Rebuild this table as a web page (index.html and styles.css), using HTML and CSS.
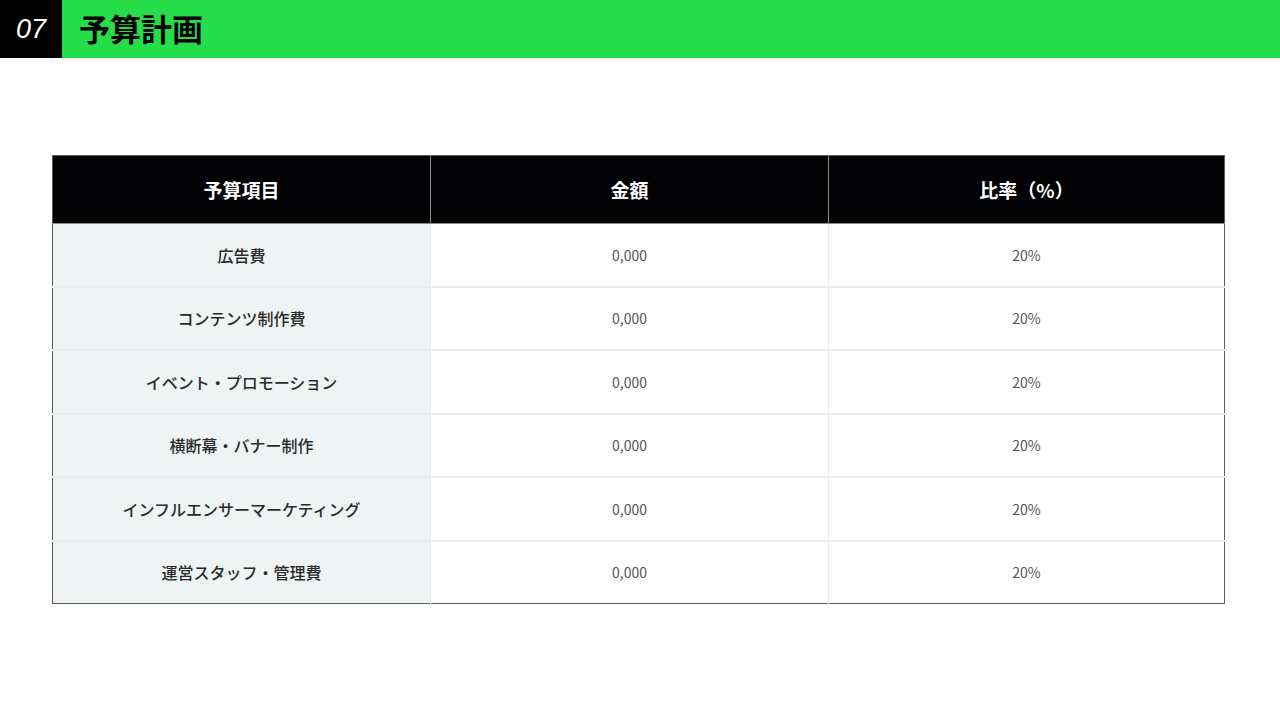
FILE: index.html
```html
<!DOCTYPE html>
<html lang="ja">
<head>
    <meta charset="UTF-8">
    <title>予算計画</title>
    <link rel="stylesheet" href="styles.css">
</head>
<body>
    <header class="slide-header">
        <div class="slide-num">07</div>
        <h1 class="slide-title">予算計画</h1>
    </header>

    <main class="content">
        <table class="budget">
            <colgroup>
                <col class="col-item">
                <col class="col-amount">
                <col class="col-rate">
            </colgroup>
            <thead>
                <tr>
                    <th>予算項目</th>
                    <th>金額</th>
                    <th>比率（%）</th>
                </tr>
            </thead>
            <tbody>
                <tr><td class="item">広告費</td><td>0,000</td><td>20%</td></tr>
                <tr><td class="item">コンテンツ制作費</td><td>0,000</td><td>20%</td></tr>
                <tr><td class="item">イベント・プロモーション</td><td>0,000</td><td>20%</td></tr>
                <tr><td class="item">横断幕・バナー制作</td><td>0,000</td><td>20%</td></tr>
                <tr><td class="item">インフルエンサーマーケティング</td><td>0,000</td><td>20%</td></tr>
                <tr><td class="item">運営スタッフ・管理費</td><td>0,000</td><td>20%</td></tr>
            </tbody>
        </table>
    </main>
</body>
</html>
```

FILE: styles.css
```css
body {
    margin: 0;
    padding: 0;
    background: #fff;
    font-family: "Noto Sans CJK JP", "Noto Sans", sans-serif;
}

.slide-header {
    display: flex;
    align-items: stretch;
    height: 58px;
    background-color: #25dd4a;
}

.slide-num {
    width: 62px;
    background-color: #000;
    color: #fff;
    font-family: "Liberation Sans", Arial, sans-serif;
    font-style: italic;
    font-size: 27px;
    display: flex;
    align-items: center;
    justify-content: center;
}

.slide-title {
    margin: 0 0 0 17px;
    font-size: 31px;
    font-weight: bold;
    color: #000;
    line-height: 56px;
}

.content {
    padding: 97px 55px 0 52px;
}

.budget {
    width: 100%;
    border-collapse: collapse;
    table-layout: fixed;
    border: 1px solid #5c5c5c;
}

.col-item { width: 378px; }
.col-amount { width: 398px; }

.budget th {
    height: 67px;
    background-color: #020103;
    color: #fff;
    font-size: 19px;
    font-weight: bold;
    border-left: 1px solid #8a8a8a;
    padding: 0;
}

.budget th:first-child {
    border-left: none;
}

.budget td {
    height: 61.5px;
    padding: 0;
    text-align: center;
    font-size: 14px;
    color: #555;
    border-top: 2px solid #ebebef;
    border-left: 1px solid #ebebef;
}

.budget tbody tr:first-child td {
    border-top: 1px solid #8a8a8a;
}

.budget td.item {
    background-color: #f0f3f3;
    color: #2a2a2a;
    font-size: 16px;
    font-weight: 500;
    border-left: none;
}
```
